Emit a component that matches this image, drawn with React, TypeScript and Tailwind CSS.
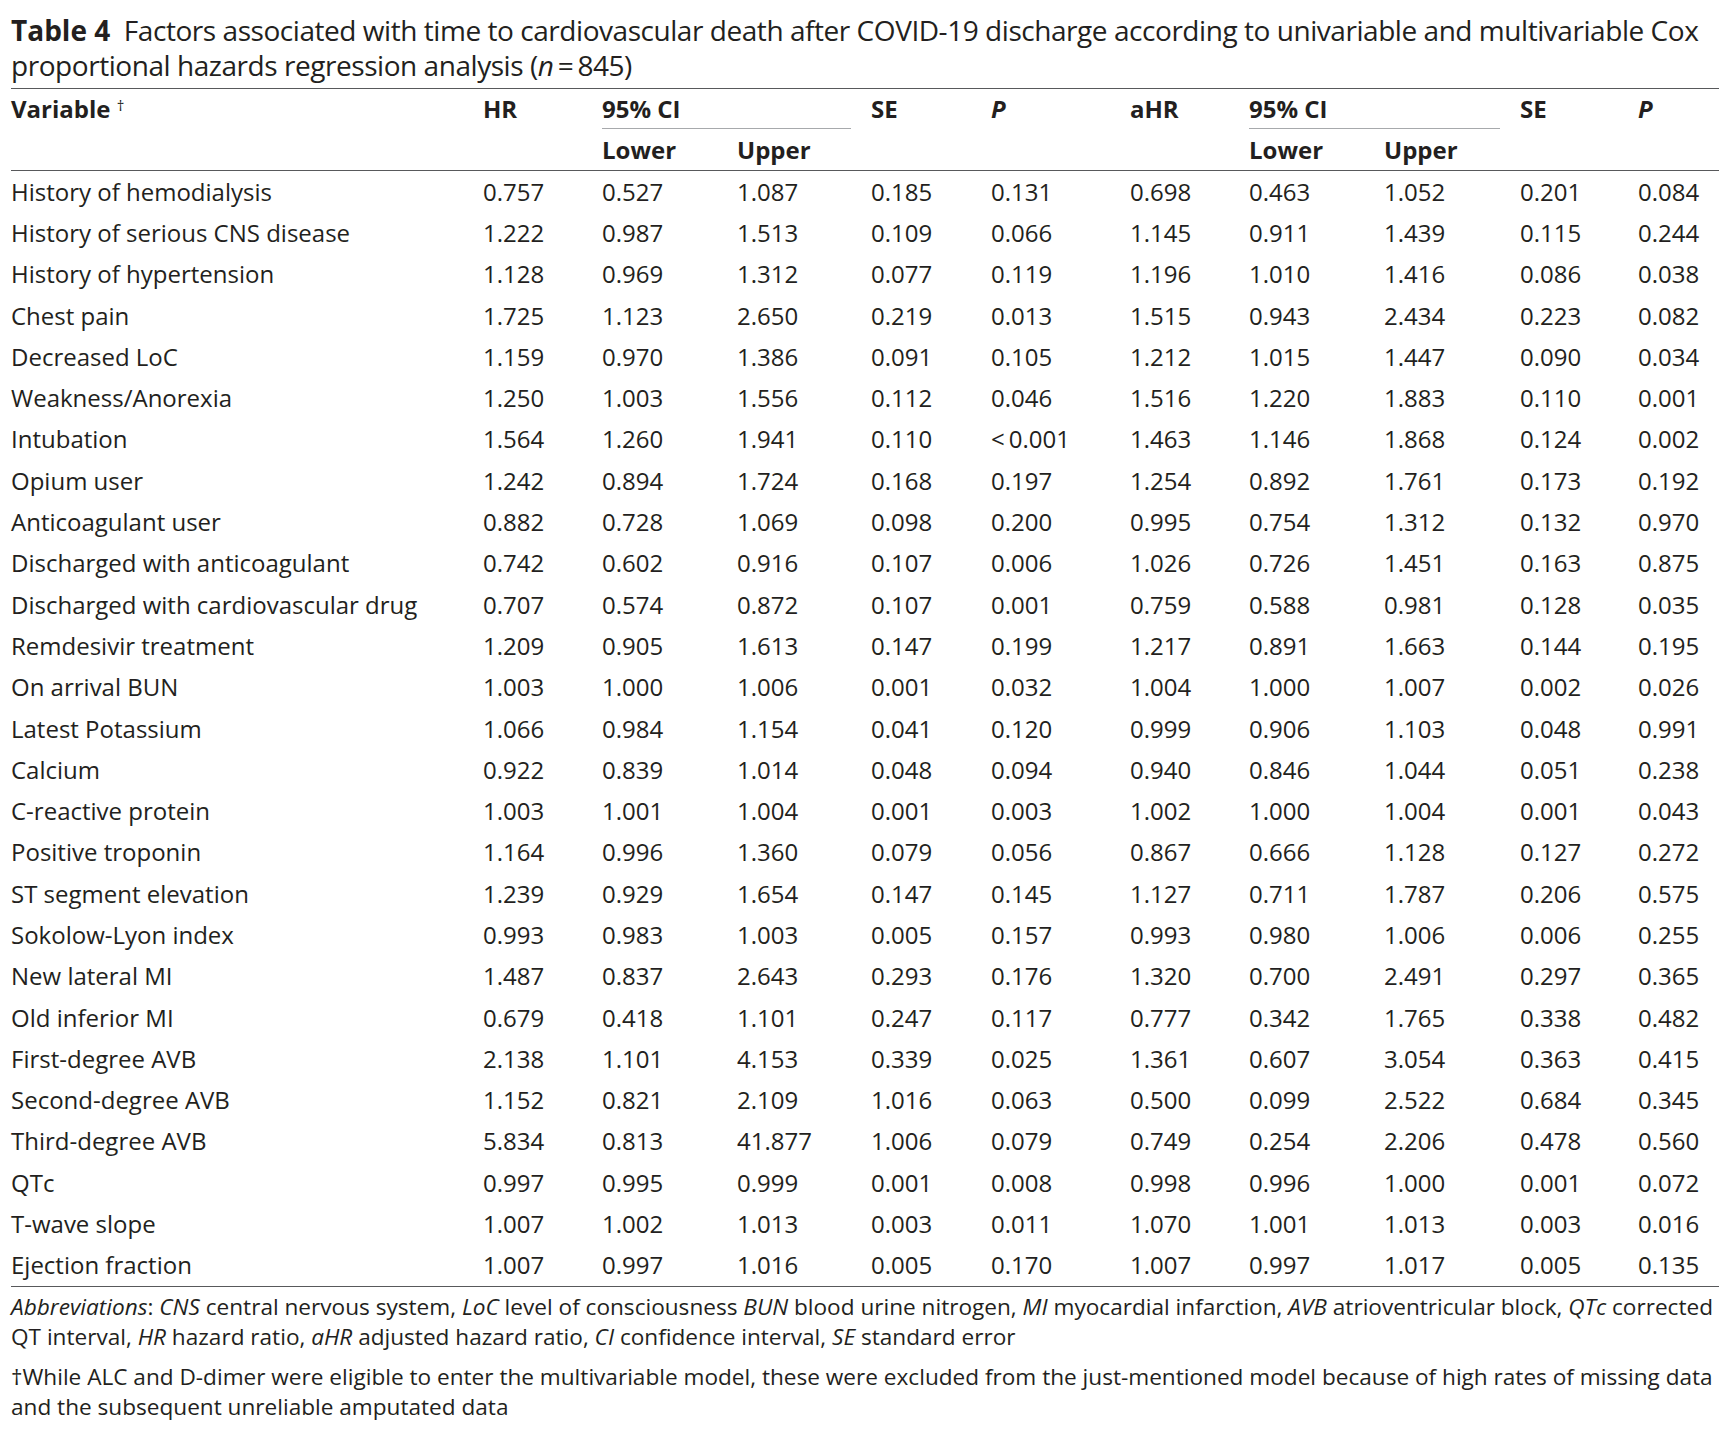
import React from "react";

const rows: string[][] = [
  ["History of hemodialysis", "0.757", "0.527", "1.087", "0.185", "0.131", "0.698", "0.463", "1.052", "0.201", "0.084"],
  ["History of serious CNS disease", "1.222", "0.987", "1.513", "0.109", "0.066", "1.145", "0.911", "1.439", "0.115", "0.244"],
  ["History of hypertension", "1.128", "0.969", "1.312", "0.077", "0.119", "1.196", "1.010", "1.416", "0.086", "0.038"],
  ["Chest pain", "1.725", "1.123", "2.650", "0.219", "0.013", "1.515", "0.943", "2.434", "0.223", "0.082"],
  ["Decreased LoC", "1.159", "0.970", "1.386", "0.091", "0.105", "1.212", "1.015", "1.447", "0.090", "0.034"],
  ["Weakness/Anorexia", "1.250", "1.003", "1.556", "0.112", "0.046", "1.516", "1.220", "1.883", "0.110", "0.001"],
  ["Intubation", "1.564", "1.260", "1.941", "0.110", "<\u20090.001", "1.463", "1.146", "1.868", "0.124", "0.002"],
  ["Opium user", "1.242", "0.894", "1.724", "0.168", "0.197", "1.254", "0.892", "1.761", "0.173", "0.192"],
  ["Anticoagulant user", "0.882", "0.728", "1.069", "0.098", "0.200", "0.995", "0.754", "1.312", "0.132", "0.970"],
  ["Discharged with anticoagulant", "0.742", "0.602", "0.916", "0.107", "0.006", "1.026", "0.726", "1.451", "0.163", "0.875"],
  ["Discharged with cardiovascular drug", "0.707", "0.574", "0.872", "0.107", "0.001", "0.759", "0.588", "0.981", "0.128", "0.035"],
  ["Remdesivir treatment", "1.209", "0.905", "1.613", "0.147", "0.199", "1.217", "0.891", "1.663", "0.144", "0.195"],
  ["On arrival BUN", "1.003", "1.000", "1.006", "0.001", "0.032", "1.004", "1.000", "1.007", "0.002", "0.026"],
  ["Latest Potassium", "1.066", "0.984", "1.154", "0.041", "0.120", "0.999", "0.906", "1.103", "0.048", "0.991"],
  ["Calcium", "0.922", "0.839", "1.014", "0.048", "0.094", "0.940", "0.846", "1.044", "0.051", "0.238"],
  ["C-reactive protein", "1.003", "1.001", "1.004", "0.001", "0.003", "1.002", "1.000", "1.004", "0.001", "0.043"],
  ["Positive troponin", "1.164", "0.996", "1.360", "0.079", "0.056", "0.867", "0.666", "1.128", "0.127", "0.272"],
  ["ST segment elevation", "1.239", "0.929", "1.654", "0.147", "0.145", "1.127", "0.711", "1.787", "0.206", "0.575"],
  ["Sokolow-Lyon index", "0.993", "0.983", "1.003", "0.005", "0.157", "0.993", "0.980", "1.006", "0.006", "0.255"],
  ["New lateral MI", "1.487", "0.837", "2.643", "0.293", "0.176", "1.320", "0.700", "2.491", "0.297", "0.365"],
  ["Old inferior MI", "0.679", "0.418", "1.101", "0.247", "0.117", "0.777", "0.342", "1.765", "0.338", "0.482"],
  ["First-degree AVB", "2.138", "1.101", "4.153", "0.339", "0.025", "1.361", "0.607", "3.054", "0.363", "0.415"],
  ["Second-degree AVB", "1.152", "0.821", "2.109", "1.016", "0.063", "0.500", "0.099", "2.522", "0.684", "0.345"],
  ["Third-degree AVB", "5.834", "0.813", "41.877", "1.006", "0.079", "0.749", "0.254", "2.206", "0.478", "0.560"],
  ["QTc", "0.997", "0.995", "0.999", "0.001", "0.008", "0.998", "0.996", "1.000", "0.001", "0.072"],
  ["T-wave slope", "1.007", "1.002", "1.013", "0.003", "0.011", "1.070", "1.001", "1.013", "0.003", "0.016"],
  ["Ejection fraction", "1.007", "0.997", "1.016", "0.005", "0.170", "1.007", "0.997", "1.017", "0.005", "0.135"],
];

const cols = "grid grid-cols-[472px_119px_135px_134px_120px_139px_119px_135px_136px_118px_81px]";

export default function App() {
  return (
    <div
      className="min-h-screen bg-white text-[#231f20] pl-[11px] pt-[13px] font-stretch-[88%]"
      style={{ fontFamily: '"Open Sans", "Noto Sans", sans-serif' }}
    >
      <div className="w-[1708px]">
        <h2 className="text-[28px] leading-[35px] font-normal tracking-[-0.45px]">
          <span className="font-bold tracking-normal">Table 4</span>&nbsp; Factors associated with time to
          cardiovascular death after COVID-19 discharge according to univariable and multivariable Cox proportional
          hazards regression analysis (<i>n</i>
          {"\u2009=\u2009"}845)
        </h2>

        <div className="mt-[5px] border-t border-[#58595b] text-[24px]">
          <div className={`${cols} h-[40px] items-center font-bold`}>
            <div>
              Variable <sup className="text-[15px] font-normal">†</sup>
            </div>
            <div>HR</div>
            <div className="col-span-2 self-stretch flex flex-col justify-center border-b border-[#a7a9ac] mr-[20px]">
              95% CI
            </div>
            <div>SE</div>
            <div className="italic">P</div>
            <div>aHR</div>
            <div className="col-span-2 self-stretch flex flex-col justify-center border-b border-[#a7a9ac] mr-[20px]">
              95% CI
            </div>
            <div>SE</div>
            <div className="italic">P</div>
          </div>
          <div className={`${cols} h-[42px] items-center font-bold border-b border-[#58595b]`}>
            <div />
            <div />
            <div>Lower</div>
            <div>Upper</div>
            <div />
            <div />
            <div />
            <div>Lower</div>
            <div>Upper</div>
            <div />
            <div />
          </div>
          <div className="border-b border-[#58595b]">
            {rows.map((r) => (
              <div key={r[0]} className={`${cols} h-[41.3px] items-center`}>
                {r.map((c, i) => (
                  <div key={i} className="whitespace-nowrap">
                    {c}
                  </div>
                ))}
              </div>
            ))}
          </div>
        </div>

        <div className="text-[22.6px] leading-[30px] mt-[5px]">
          <p>
            <i>Abbreviations</i>: <i>CNS</i> central nervous system, <i>LoC</i> level of consciousness <i>BUN</i> blood
            urine nitrogen, <i>MI</i> myocardial infarction, <i>AVB</i> atrioventricular block, <i>QTc</i> corrected QT
            interval, <i>HR</i> hazard ratio, <i>aHR</i> adjusted hazard ratio, <i>CI</i> confidence interval, <i>SE</i>{" "}
            standard error
          </p>
          <p className="mt-[10px]">
            †While ALC and D-dimer were eligible to enter the multivariable model, these were excluded from the
            just-mentioned model because of high rates of missing data and the subsequent unreliable amputated data
          </p>
        </div>
      </div>
    </div>
  );
}
